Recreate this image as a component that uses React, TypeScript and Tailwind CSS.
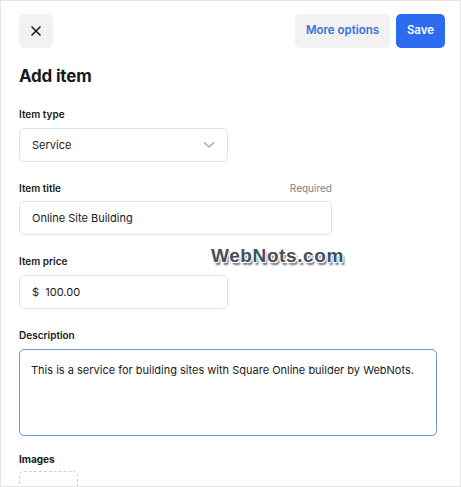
import React from "react";

export default function App() {
  return (
    <div className="w-[461px] h-[487px] bg-white border border-[#e6e6e6] overflow-hidden text-[#1a1a1a]" style={{ fontFamily: "Inter, 'Liberation Sans', sans-serif" }}>
      <div className="pl-[18px] pr-[15px] pt-[13px]">
        <div className="flex items-center justify-between">
          <button className="w-[34px] h-[34px] rounded-[5px] bg-[#f2f2f2] flex items-center justify-center">
            <svg width="12" height="12" viewBox="0 0 12 12" fill="none" stroke="#1a1a1a" strokeWidth="1.6" strokeLinecap="round">
              <path d="M2 2 L10 10 M10 2 L2 10" />
            </svg>
          </button>
          <div className="flex gap-[6px]">
            <button className="h-[34px] w-[95px] whitespace-nowrap rounded-[5px] bg-[#f2f2f2] text-[11.5px] font-semibold text-[#3a6fe0]">More options</button>
            <button className="h-[34px] w-[49px] rounded-[5px] bg-[#2d6cf1] text-[11.5px] font-semibold text-white">Save</button>
          </div>
        </div>
        <h1 className="mt-[16px] text-[17px] font-bold tracking-[-0.2px] leading-[24px]">Add item</h1>

        <div className="mt-[19px] text-[10px] font-semibold leading-[14px]">Item type</div>
        <div className="mt-[7px] w-[209px] h-[34px] rounded-[5px] border border-[#e3e3e3] flex items-center justify-between px-[12px]">
          <span className="text-[11px]">Service</span>
          <svg width="12" height="8" viewBox="0 0 12 8" fill="none" stroke="#9a9a9a" strokeWidth="1.1">
            <path d="M1 1.5 L6 6 L11 1.5" />
          </svg>
        </div>

        <div className="mt-[19px] w-[313px] flex justify-between items-center leading-[14px]">
          <span className="text-[10px] font-semibold">Item title</span>
          <span className="text-[10px] text-[#808080]">Required</span>
        </div>
        <div className="mt-[6px] w-[313px] h-[34px] rounded-[5px] border border-[#e3e3e3] flex items-center px-[12px]">
          <span className="text-[11px]">Online Site Building</span>
        </div>

        <div className="relative">
          <div className="mt-[19px] text-[10px] font-semibold leading-[14px]">Item price</div>
          <div className="absolute left-[192px] top-[-10px] text-[19px] font-bold text-[#44505c] tracking-[0.6px] leading-[24px]" style={{ fontFamily: "'Liberation Sans', Arial, sans-serif", textShadow: "-1px -1px 0 #fff, 1px -1px 0 #fff, -1px 1px 0 #fff, 1px 1px 0 #fff, 0 -1px 0 #fff, 0 1px 0 #fff, 2px 3px 2px rgba(0,0,0,0.6)" }}>WebNots.com</div>
        </div>
        <div className="mt-[7px] w-[209px] h-[34px] rounded-[5px] border border-[#e3e3e3] flex items-center px-[12px]">
          <span className="text-[11px]">$&nbsp;&nbsp;100.00</span>
        </div>

        <div className="mt-[19px] text-[10px] font-semibold leading-[14px]">Description</div>
        <div className="mt-[7px] w-[418px] h-[87px] rounded-[5px] border-[1.5px] border-[#6f93e6] px-[11px] pt-[6px]">
          <span className="text-[11px]">This is a service for building sites with Square Online builder by WebNots.</span>
        </div>

        <div className="mt-[16px] text-[10px] font-bold leading-[14px]">Images</div>
        <div className="mt-[5px] w-[59px] h-[40px] rounded-[5px] border border-dashed border-[#cfcfcf]"></div>
      </div>
    </div>
  );
}
